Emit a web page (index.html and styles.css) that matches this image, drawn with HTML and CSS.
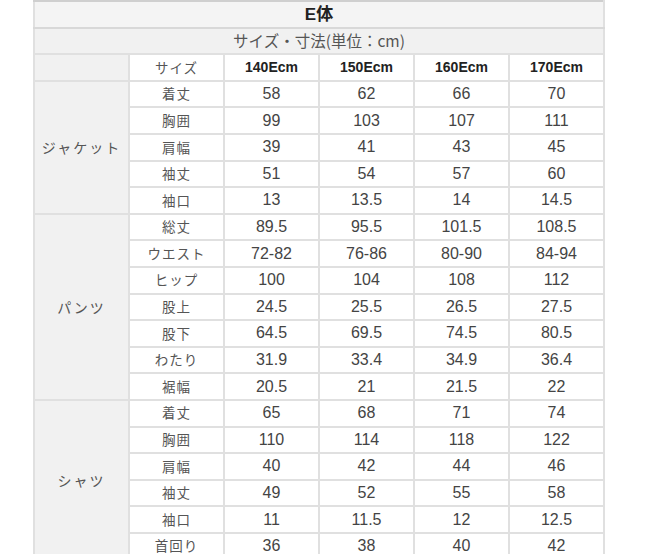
FILE: index.html
```html
<!DOCTYPE html>
<html lang="ja">
<head>
<meta charset="utf-8">
<link rel="stylesheet" href="styles.css">
</head>
<body>
<table class="size-table">
  <colgroup>
    <col><col><col><col><col><col>
  </colgroup>
  <tr class="title-row"><td colspan="6">E体</td></tr>
  <tr class="sub-row"><td colspan="6">サイズ・寸法(単位：cm)</td></tr>
  <tr class="head-row">
    <td class="group"></td>
    <td class="label">サイズ</td>
    <td class="hd">140Ecm</td>
    <td class="hd">150Ecm</td>
    <td class="hd">160Ecm</td>
    <td class="hd">170Ecm</td>
  </tr>
  <tr><td class="group" rowspan="5">ジャケット</td><td class="label">着丈</td><td>58</td><td>62</td><td>66</td><td>70</td></tr>
  <tr><td class="label">胸囲</td><td>99</td><td>103</td><td>107</td><td>111</td></tr>
  <tr><td class="label">肩幅</td><td>39</td><td>41</td><td>43</td><td>45</td></tr>
  <tr><td class="label">袖丈</td><td>51</td><td>54</td><td>57</td><td>60</td></tr>
  <tr><td class="label">袖口</td><td>13</td><td>13.5</td><td>14</td><td>14.5</td></tr>
  <tr><td class="group" rowspan="7">パンツ</td><td class="label">総丈</td><td>89.5</td><td>95.5</td><td>101.5</td><td>108.5</td></tr>
  <tr><td class="label">ウエスト</td><td>72-82</td><td>76-86</td><td>80-90</td><td>84-94</td></tr>
  <tr><td class="label">ヒップ</td><td>100</td><td>104</td><td>108</td><td>112</td></tr>
  <tr><td class="label">股上</td><td>24.5</td><td>25.5</td><td>26.5</td><td>27.5</td></tr>
  <tr><td class="label">股下</td><td>64.5</td><td>69.5</td><td>74.5</td><td>80.5</td></tr>
  <tr><td class="label">わたり</td><td>31.9</td><td>33.4</td><td>34.9</td><td>36.4</td></tr>
  <tr><td class="label">裾幅</td><td>20.5</td><td>21</td><td>21.5</td><td>22</td></tr>
  <tr><td class="group" rowspan="6">シャツ</td><td class="label">着丈</td><td>65</td><td>68</td><td>71</td><td>74</td></tr>
  <tr><td class="label">胸囲</td><td>110</td><td>114</td><td>118</td><td>122</td></tr>
  <tr><td class="label">肩幅</td><td>40</td><td>42</td><td>44</td><td>46</td></tr>
  <tr><td class="label">袖丈</td><td>49</td><td>52</td><td>55</td><td>58</td></tr>
  <tr><td class="label">袖口</td><td>11</td><td>11.5</td><td>12</td><td>12.5</td></tr>
  <tr><td class="label">首回り</td><td>36</td><td>38</td><td>40</td><td>42</td></tr>
</table>
</body>
</html>
```
FILE: styles.css
```css
html, body {
  margin: 0;
  padding: 0;
  background: #ffffff;
}
body {
  font-family: "Liberation Sans", "Noto Sans CJK JP", sans-serif;
  overflow: hidden;
}
.size-table {
  margin-left: 33px;
  width: 572px;
  border-collapse: collapse;
  table-layout: fixed;
}
.size-table td {
  border: 2px solid #e0e0e0;
  padding: 0;
  height: 24.6px;
  text-align: center;
  vertical-align: middle;
  font-size: 16px;
  color: #444;
  line-height: 1;
}
.title-row td {
  background: #f4f4f4;
  border-top-color: #cfcfcf;
  border-bottom-color: #d8d8d8;
  font-weight: bold;
  font-size: 17px;
  color: #222;
}
.sub-row td {
  background: #f1f1f1;
  font-family: "Noto Sans CJK JP", sans-serif;
  font-size: 15.5px;
  color: #555;
}
.size-table td.group {
  background: #f1f1f1;
  font-family: "Noto Sans CJK JP", sans-serif;
  font-size: 14px;
  letter-spacing: 2px;
  color: #555;
}
.size-table td.label {
  font-family: "Noto Sans CJK JP", sans-serif;
  font-size: 13.5px;
  letter-spacing: 1px;
  color: #555;
}
.size-table td.hd {
  font-weight: bold;
  font-size: 14px;
  color: #222;
}
```
